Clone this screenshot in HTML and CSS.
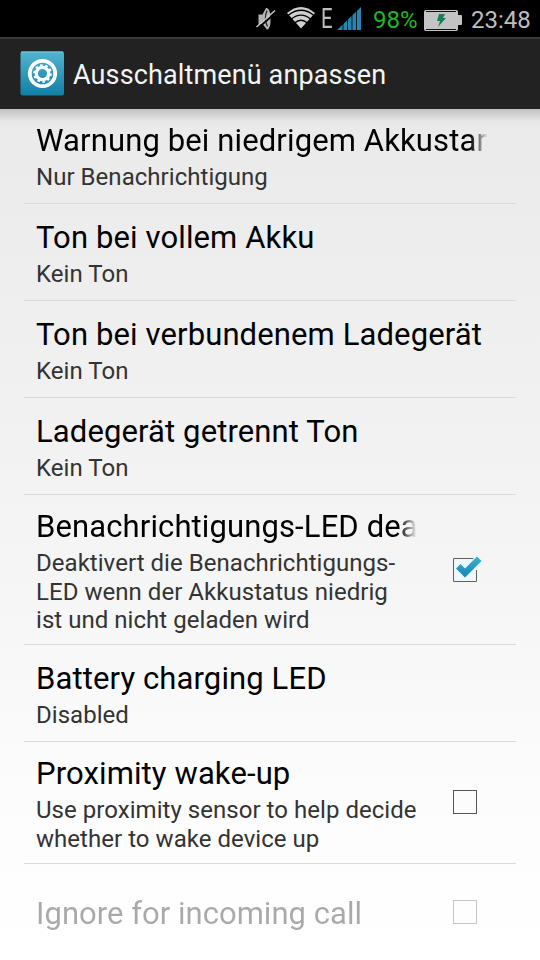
FILE: index.html
```
<!DOCTYPE html>
<html lang="de">
<head>
<meta charset="utf-8">
<title>Ausschaltmenü anpassen</title>
<link rel="stylesheet" href="styles.css">
</head>
<body>
<div class="screen">
<header class="status">
<svg class="mute" width="20" height="24" viewBox="0 0 20 24"><path d="M2.500 7.500h4L10 1q4-1 4.500 10T11 22.500L6.500 17h-4z" fill="#b4b4b4"/><path d="M11 3.500q-3.500 8 .5 16" fill="none" stroke="#222" stroke-width="1.200"/><path d="M1.500 21.500L20 5.500" stroke="#000" stroke-width="1.800"/><path d="M.5 20L19 3.500" stroke="#c8c8c8" stroke-width="1.500"/></svg>
<svg class="wifi" width="28" height="22" viewBox="0 0 28 22"><path d="M0 6Q14-6 28 6L14 21.500z" fill="#d0d0d0"/><path d="M1 8.500Q14-2 27 8.500M4 12.300Q14 4 24 12.300M7.500 16Q14 10.500 20.500 16" fill="none" stroke="#000" stroke-width="1.300"/></svg>
<span class="edge">E</span>
<svg class="signal" width="24" height="23" viewBox="0 0 24 23"><path d="M0 23L24 0v23z" fill="#2586b0"/><path d="M6 10v13M10.500 6v17M15 3v20M19.500 0v23" stroke="#000" stroke-width=".8"/></svg>
<span class="percent">98%</span>
<svg class="battery" width="38" height="21" viewBox="0 0 38 21"><rect width="34" height="21" rx="2" fill="#c4c4c4"/><path d="M34 5h3q1 0 1 1v8q0 1-1 1h-3z" fill="#c4c4c4"/><path d="M2 1.500h30M2 19.500h30" stroke="#111" stroke-width="1"/><path d="M15 4h6l-2 4h3l-8 9 2-6h-3z" fill="#168057"/></svg>
<span class="clock">23:48</span>
</header>
<div class="bar">
<svg class="logo" width="44" height="45" viewBox="0 0 44 45"><defs><linearGradient id="tile" x2="0" y2="1"><stop stop-color="#53b5cf"/><stop offset="1" stop-color="#107fa5"/></linearGradient></defs><rect x=".5" y=".5" width="43.500" height="44" rx="2" fill="url(#tile)"/><path d="M1 1h42" stroke="#78c9dc"/><circle cx="22.500" cy="22.500" r="12.700" fill="none" stroke="#fff" stroke-width="3.800"/><circle cx="22.500" cy="22.500" r="6.200" fill="none" stroke="#fff" stroke-width="3.300"/><circle cx="22.500" cy="22.500" r="8.300" fill="none" stroke="#fff" stroke-width="2" stroke-dasharray="2.600 2.615"/></svg>
<h1>Ausschaltmenü anpassen</h1>
</div>
<main class="list">
<section class="row first"><div class="text"><h2 class="fade">Warnung bei niedrigem Akkustar</h2><p>Nur Benachrichtigung</p></div></section>
<section class="row"><div class="text"><h2>Ton bei vollem Akku</h2><p>Kein Ton</p></div></section>
<section class="row"><div class="text"><h2>Ton bei verbundenem Ladegerät</h2><p>Kein Ton</p></div></section>
<section class="row"><div class="text"><h2>Ladegerät getrennt Ton</h2><p>Kein Ton</p></div></section>
<section class="row multi three"><div class="text"><h2 class="fade">Benachrichtigungs-LED dea</h2><p>Deaktivert die Benachrichtigungs-<br>LED wenn der Akkustatus niedrig<br>ist und nicht geladen wird</p></div>
<svg class="check" width="32" height="28" viewBox="0 0 32 28"><defs><linearGradient id="tick" x2="0" y2="1"><stop stop-color="#45afd0"/><stop offset="1" stop-color="#1685b2"/></linearGradient></defs><path d="M24.500 14v11.500h-23v-23h20" fill="#eff8f8" stroke="#606060"/><path d="M4 12.500l4.500-4.500 4.500 4.500L25 .500l4.500 4.500L13 21.500z" fill="url(#tick)" stroke="#e0fbff" stroke-width="2" stroke-linejoin="round" paint-order="stroke"/></svg></section>
<section class="row"><div class="text"><h2>Battery charging LED</h2><p>Disabled</p></div></section>
<section class="row multi two"><div class="text"><h2>Proximity wake-up</h2><p>Use proximity sensor to help decide<br>whether to wake device up</p></div><span class="box"></span></section>
<section class="row last"><div class="text"><h2>Ignore for incoming call</h2></div><span class="box"></span></section>
</main>
</div>
</body>
</html>
```
FILE: styles.css
```
* { box-sizing: border-box; }
body { margin: 0; font-family: Roboto, sans-serif; }
.screen { width: 540px; height: 960px; overflow: hidden; display: flex; flex-direction: column; background: #fff; }
.status { height: 37px; flex: none; background: #000; display: flex; align-items: flex-start; padding: 7px 0 0 256px; line-height: 26px; color: #bebebe; white-space: nowrap; }
.status svg { flex: none; }
.wifi { margin-left: 11px; }
.edge { width: 11px; margin-left: 6px; font-size: 27px; line-height: 25px; transform: scaleX(.75); transform-origin: left; }
.signal { margin-left: 5px; }
.percent { width: 45px; margin-left: 12px; color: #20b624; font-size: 24px; }
.battery { margin: 3px 0 0 6px; }
.clock { margin-left: 9px; font-size: 24px; }
.bar { height: 72px; flex: none; display: flex; align-items: flex-start; padding: 12px 0 0 20px; background: #222; border-top: 2px solid #393939; }
h1, h2, p { margin: 0; font-weight: 400; white-space: nowrap; }
h1 { margin-left: 9px; color: #f4f4f4; font-size: 27px; line-height: 48px; letter-spacing: .13px; }
.logo { flex: none; }
.list { flex: 1; padding: 0 24px; background: linear-gradient(rgba(0,0,0,.17), rgba(0,0,0,.02) 12px, transparent 20px), linear-gradient(#eaeaea, #efefef 25%, #f5f5f5 54%, #fcfcfc 80%, #fff); }
.row { height: 97px; display: flex; align-items: flex-start; padding: 16px 0 0 12px; border-bottom: 1px solid #d9dada; }
.first { height: 95px; padding-top: 14px; }
.text { width: 452px; flex: none; }
h2 { font-size: 31px; line-height: 36px; letter-spacing: .12px; color: #000; }
p { font-size: 24px; line-height: 28.700px; letter-spacing: .04px; margin-top: 4px; color: #333; }
.fade { -webkit-mask-image: linear-gradient(to right, #000 calc(100% - 18px), transparent); mask-image: linear-gradient(to right, #000 calc(100% - 18px), transparent); }
.multi { padding-top: 14px; }
.multi .text { width: 381px; }
.multi p { margin-top: 4px; }
.three { height: 150px; }
.two { height: 122px; }
.check { margin: 47px 0 0 35px; }
.box { width: 24px; height: 24px; margin: 34px 0 0 36px; border: 1px solid #555; }
.last { border: 0; padding-top: 32px; opacity: .33; }
.last h2 { letter-spacing: .03px; }
.last .text { width: 381px; }
.last .box { margin-top: 4px; }
```
